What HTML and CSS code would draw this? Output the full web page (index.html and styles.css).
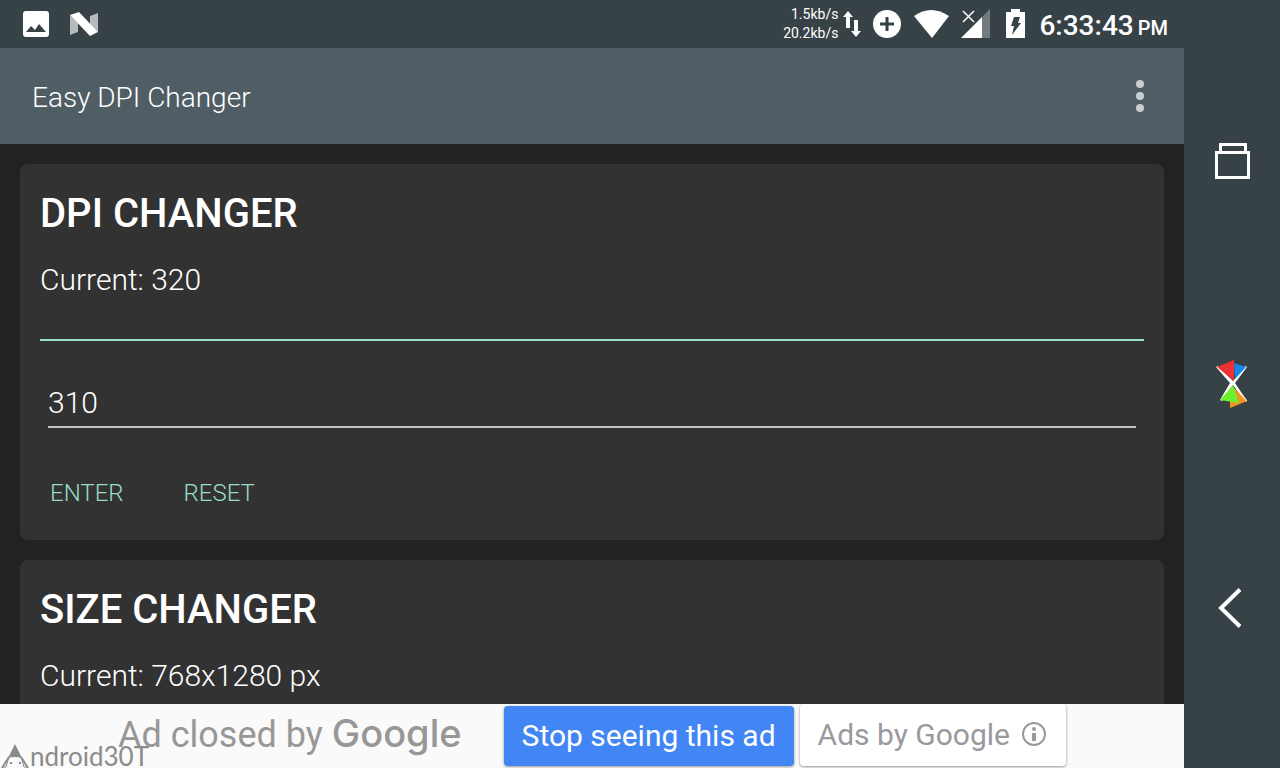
FILE: index.html
```
<!DOCTYPE html>
<html lang="en">
<head>
    <meta charset="UTF-8">
    <meta name="viewport" content="width=device-width, initial-scale=1">
    <title>Easy DPI Changer</title>
    <link rel="stylesheet" href="styles.css">
</head>
<body>
<div class="root">

    <div class="app">
        <div class="status-bar">
            <div class="notifications">
                <svg width="26" height="26" viewBox="0 0 26 26">
                    <path fill="#fff" fill-rule="evenodd" d="M3 0h20a3 3 0 0 1 3 3v20a3 3 0 0 1-3 3H3a3 3 0 0 1-3-3V3a3 3 0 0 1 3-3zM3 21h20l-7-8-4 6-4-4z"/>
                </svg>
                <svg width="28" height="24" viewBox="0 0 28 24">
                    <path fill="#b6babc" d="M0 3l8 8v9l-8 3zM20 4l8-3v19l-8-7z"/>
                    <path fill="#fff" d="M0 3l9-3 19 20-8 4z"/>
                </svg>
            </div>
            <div class="status-icons">
                <div class="network">
                    <div class="speed">
                        <span>1.5kb/s</span>
                        <span>20.2kb/s</span>
                    </div>
                    <svg width="18" height="26" viewBox="0 0 18 26">
                        <path fill="#fff" d="M5 0l5 6H7v11H3V6H0zM13 26l-5-6h3V9h4v11h3z"/>
                    </svg>
                </div>
                <svg width="28" height="28" viewBox="0 0 28 28">
                    <circle cx="14" cy="14" r="14" fill="#fff"/>
                    <path stroke="#374247" stroke-width="3" d="M7 14h14M14 7v14"/>
                </svg>
                <svg width="36" height="28" viewBox="0 0 36 28">
                    <path fill="#fff" d="M1 6q17-12 35 0L19 28z"/>
                </svg>
                <svg width="32" height="30" viewBox="0 0 32 30">
                    <path fill="#737b81" d="M21 8l8-8v29h-8z"/>
                    <path fill="#fff" d="M0 29L21 8v21z"/>
                    <path stroke="#374247" stroke-width="4" d="M2 2l11 11M13 2L2 13"/>
                    <path stroke="#fff" stroke-width="1.500" d="M2 2l11 11M13 2L2 13"/>
                </svg>
                <svg width="22" height="30" viewBox="0 0 22 30">
                    <path fill="#fff" d="M1 3h5V0h9v3h5v26H1z"/>
                    <path fill="#374247" d="M9 8h6l-2 6h3L7 26l2-9H6z"/>
                </svg>
                <div class="clock">6:33:43<small>PM</small></div>
            </div>
        </div>

        <div class="toolbar">
            <h1>Easy DPI Changer</h1>
            <button type="button" class="menu-btn" aria-label="More options">
                <svg width="8" height="32" viewBox="0 0 8 32" fill="#cbced1">
                    <circle cx="4" cy="4" r="4"/>
                    <circle cx="4" cy="16" r="4"/>
                    <circle cx="4" cy="28" r="4"/>
                </svg>
            </button>
        </div>

        <div class="content">
            <div class="card">
                <h2>DPI CHANGER</h2>
                <p>Current: 320</p>
                <hr>
                <input type="text" id="dpi" value="310" aria-label="DPI">
                <div class="card-buttons">
                    <button type="button">ENTER</button>
                    <button type="button">RESET</button>
                </div>
            </div>
            <div class="card">
                <h2>SIZE CHANGER</h2>
                <p>Current: 768x1280 px</p>
            </div>
        </div>

        <div class="ad">
            <div class="ad-text">Ad closed by <span class="google">Google</span></div>
            <div class="ad-buttons">
                <button type="button" class="stop-btn">Stop seeing this ad</button>
                <button type="button" class="info-btn">Ads by Google
                    <svg width="24" height="24" viewBox="0 0 24 24">
                        <circle cx="12" cy="12" r="11" fill="none" stroke="#9a9a9e" stroke-width="2"/>
                        <circle cx="12" cy="7" r="2" fill="#9a9a9e"/>
                        <path fill="#9a9a9e" d="M10 11h4v8h-4z"/>
                    </svg>
                </button>
            </div>
            <div class="watermark">
                <svg width="28" height="24" viewBox="0 0 28 24">
                    <path fill="#8b8b8b" d="M14 0l7 14q-7-2-14 0z"/>
                    <path fill="none" stroke="#8b8b8b" stroke-width="2" d="M8 13L1 24M20 13l7 11"/>
                    <path fill="none" stroke="#8b8b8b" stroke-width="1" d="M1 23h4M23 23h4M8 13l-3 10M20 13l3 10"/>
                    <path fill="#8b8b8b" d="M9 18h2v2H9zM18 18h2v2h-2z"/>
                </svg>
                <span>ndroid30T</span>
            </div>
        </div>
    </div>

    <div class="nav-bar">
        <button type="button" aria-label="Recent apps">
            <svg width="36" height="38" viewBox="0 0 36 38" fill="none" stroke="#fff" stroke-width="3">
                <path d="M6.500 10V3.500h25V10"/>
                <path d="M2.500 11.500h32v25h-32z"/>
            </svg>
        </button>
        <button type="button" aria-label="Home">
            <svg width="32" height="48" viewBox="0 0 32 48">
                <path fill="#fff" d="M0 7l14 16L4 40l2 1 11-16 12 17 2-1-12-18L31 7l-2-1-12 15L2 6z"/>
                <path fill="#ee3133" d="M1 7l17-7v21z"/>
                <path fill="#1586e8" d="M18 3l12 4-11 12z"/>
                <path fill="#f7931e" d="M17 27l14 14-17 7V40z"/>
                <path fill="#6af02e" d="M17 25l6 18-19-3z"/>
                <path stroke="#fff" stroke-width="1" d="M18 25l13 16"/>
            </svg>
        </button>
        <button type="button" aria-label="Back">
            <svg width="36" height="40" viewBox="0 0 36 40">
                <path fill="none" stroke="#fff" stroke-width="4" d="M26 1.500L7 20l19 18.500"/>
            </svg>
        </button>
    </div>

</div>
</body>
</html>
```

FILE: styles.css
```
* {
    box-sizing: border-box;
}

html, body {
    height: 100%;
}

body {
    margin: 0;
    font-family: Roboto, sans-serif;
    font-weight: 300;
    color: #fff;
    background: #222;
}

button {
    padding: 0;
    border: 0;
    background: none;
    color: inherit;
    font: inherit;
    cursor: pointer;
}

svg {
    display: block;
    flex: none;
}

.root {
    display: flex;
    height: 100%;
    overflow: hidden;
}

.app {
    flex: 1;
    min-width: 0;
    display: flex;
    flex-direction: column;
}

/* status bar */
.status-bar {
    flex: none;
    display: flex;
    align-items: center;
    justify-content: space-between;
    height: 48px;
    padding: 0 16px 0 23px;
    background: #374247;
}

.notifications {
    display: flex;
    align-items: center;
    gap: 21px;
}

.status-icons {
    display: flex;
    align-items: center;
    gap: 12px;
}

.network {
    display: flex;
    align-items: center;
    gap: 5px;
}

.speed {
    display: flex;
    flex-direction: column;
    text-align: right;
    font-size: 14px;
    font-weight: 400;
    line-height: 19px;
}

.clock {
    display: flex;
    align-items: baseline;
    gap: 4px;
    padding-top: 2px;
    font-size: 28px;
    font-weight: 500;
    white-space: nowrap;
}

.clock small {
    font-size: 20px;
}

/* toolbar */
.toolbar {
    flex: none;
    display: flex;
    align-items: center;
    justify-content: space-between;
    height: 96px;
    padding: 0 20px 0 32px;
    background: #505d65;
}

.toolbar h1 {
    margin: 0;
    padding-top: 2px;
    font-size: 28px;
    font-weight: 300;
}

.menu-btn {
    display: flex;
    align-items: center;
    justify-content: center;
    width: 48px;
    height: 48px;
}

/* cards */
.content {
    flex: 1;
    min-height: 0;
    display: flex;
    flex-direction: column;
    gap: 20px;
    padding: 20px;
    overflow: hidden;
}

.card {
    flex: none;
    padding: 24px 20px 22px;
    border-radius: 8px;
    background: #323232;
}

.card h2 {
    margin: 0 0 20px;
    font-size: 40px;
    font-weight: 500;
    line-height: 52px;
}

.card p {
    margin: 0;
    font-size: 30px;
    line-height: 40px;
}

.card hr {
    height: 2px;
    margin: 39px 0;
    border: 0;
    background: #99dbc9;
}

.card input {
    display: block;
    width: calc(100% - 16px);
    height: 48px;
    margin: 0 8px;
    padding: 0 0 2px;
    border: 0;
    border-bottom: 2px solid #c1c1c1;
    border-radius: 0;
    outline: none;
    background: none;
    color: #fff;
    font: inherit;
    font-size: 30px;
}

.card-buttons {
    display: flex;
    gap: 40px;
    margin-top: 40px;
}

.card-buttons button {
    height: 50px;
    padding: 0 10px;
    font-size: 24px;
    color: #99dbc9;
}

/* ad */
.ad {
    flex: none;
    position: relative;
    display: flex;
    align-items: flex-start;
    justify-content: center;
    gap: 42px;
    height: 64px;
    background: #fafafa;
    font-weight: 400;
    white-space: nowrap;
}

.ad-text {
    display: flex;
    align-items: baseline;
    gap: 9px;
    font-size: 36px;
    line-height: 58px;
    color: #979797;
}

.google {
    font-family: Inter, sans-serif;
    font-size: 38px;
    font-weight: 500;
}

.ad-buttons {
    display: flex;
    align-items: flex-end;
    gap: 6px;
}

.stop-btn, .info-btn {
    display: flex;
    align-items: center;
    gap: 12px;
    height: 60px;
    padding: 0 18px 2px;
    border-radius: 4px;
    box-shadow: 0 1px 3px rgba(0, 0, 0, 0.4);
    font-size: 30px;
}

.stop-btn {
    background: #4285f4;
}

.info-btn {
    height: 62px;
    padding-right: 20px;
    background: #fff;
    color: #9a9a9e;
}

.watermark {
    position: absolute;
    left: 1px;
    bottom: 0;
    display: flex;
    align-items: flex-end;
    gap: 1px;
    font-family: Lato, sans-serif;
    font-size: 26px;
    line-height: 24px;
    color: #8b8b8b;
}

/* navigation */
.nav-bar {
    flex: none;
    display: flex;
    flex-direction: column;
    width: 96px;
    padding: 48px 0;
    background: #374247;
}

.nav-bar button {
    flex: 1;
    display: flex;
    align-items: center;
    justify-content: center;
}
```
